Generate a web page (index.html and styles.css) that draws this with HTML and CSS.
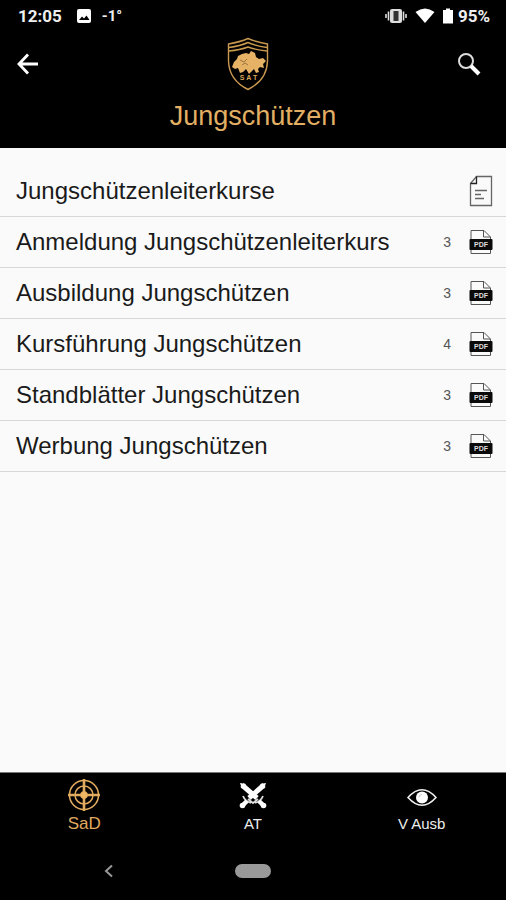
FILE: index.html
```html
<!DOCTYPE html>
<html lang="de">

<head>
  <meta charset="UTF-8">
  <meta name="viewport" content="width=device-width, initial-scale=1.0">
  <title>Jungschützen</title>
  <link rel="stylesheet" href="styles.css">
</head>

<body>

  <header>
    <div class="status">
      <span class="time">12:05</span>
      <svg width="16" height="16" viewBox="0 0 16 16">
        <rect x="1" y="1" width="14" height="14" rx="2" fill="#fff" />
        <path d="M3 12L6 8.500L8 10.500L10.500 7.500L13.500 12Z" fill="#000" />
      </svg>
      <span class="temp">-1°</span>
      <div class="status-right">
        <svg width="22" height="16" viewBox="0 0 22 16">
          <rect x="5" y="1" width="12" height="14" rx="2" fill="#ddd" />
          <rect x="8.500" y="3" width="5" height="10" fill="#333" />
          <path d="M3.500 3.500V12.500M18.500 3.500V12.500M1 6V10M21 6V10" stroke="#ddd" stroke-width="1.600" />
        </svg>
        <svg width="20" height="16" viewBox="0 0 20 16">
          <path d="M0.500 4Q10 -3 19.500 4L10 15Z" fill="#fff" />
        </svg>
        <svg width="10" height="16" viewBox="0 0 10 16">
          <path d="M0 2H3V0.500H7V2H10V15.500H0Z" fill="#fff" />
        </svg>
        <span class="battery">95%</span>
      </div>
    </div>

    <div class="topbar">
      <button class="icon-btn" aria-label="Zurück">
        <svg width="22" height="22" viewBox="0 0 22 22" fill="none" stroke="#fff" stroke-width="2.800">
          <path d="M11 1.500L2 11L11 20.500M2 11H21" />
        </svg>
      </button>
      <svg class="logo" width="42" height="54" viewBox="0 0 42 54">
        <g fill="none" stroke="#c9994f" stroke-width="1.400">
          <path d="M1.500 7Q13 5 21 1.500Q29 5 40.500 7V24Q40 43 21 52.500Q2 43 1.500 24Z" />
          <path d="M2 10.500Q13 9 21 5.500Q29 9 40 10.500M2 14Q13 13 21 10Q29 13 40 14" />
        </g>
        <path d="M5 30L7 25L10 22L11 19L15 17L19 16L22 17L24 14L28 16L29 20L32 22L36 21L39 24L36 27L37 31L33 30L31 32L32 35L29 36L27 32L24 35L22 37L19 32L16 35L13 36L11 31L8 32Z" fill="#e5b266" />
        <path d="M13 23L17 25L20 22M15 28L18 26L21 28" stroke="#9b7440" stroke-width="1" fill="none" />
        <text x="21.500" y="43" text-anchor="middle" font-family="Liberation Sans, sans-serif" font-size="7" font-weight="bold" fill="#d9a75c">S A T</text>
      </svg>
      <button class="icon-btn" aria-label="Suchen">
        <svg width="24" height="24" viewBox="0 0 24 24">
          <circle cx="9" cy="9" r="7" fill="none" stroke="#ddd" stroke-width="2" />
          <path d="M14 14L22 22" stroke="#fff" stroke-width="4" />
        </svg>
      </button>
    </div>
    <h1>Jungschützen</h1>
  </header>

  <main>
    <ul class="list">
      <li>
        <a href="#">
          <span class="name">Jungschützenleiterkurse</span>
          <svg width="24" height="32" viewBox="0 0 24 32" fill="none" stroke="#666">
            <path d="M7.500 1.500H22.500V30.500H1.500V8.500Z" stroke-width="1.300" />
            <path d="M7.500 1.500V8.500H1.500" stroke="#222" stroke-width="1.300" />
            <path d="M6 15.500H18M6 19.500H12M6 23.500H15" stroke-width="1.300" />
          </svg>
        </a>
      </li>
      <li>
        <a href="#">
          <span class="name">Anmeldung Jungschützenleiterkurs</span>
          <span class="count">3</span>
          <svg class="pdf" width="24" height="26" viewBox="0 0 24 26">
            <path d="M2 10V1.500H15L21.500 8V10M2 20V24.500H21.500V20M14.500 1.500V8H21" />
            <rect x="0.500" y="10" width="23" height="11" rx="1" />
            <text x="12" y="18" text-anchor="middle">PDF</text>
          </svg>
        </a>
      </li>
      <li>
        <a href="#">
          <span class="name">Ausbildung Jungschützen</span>
          <span class="count">3</span>
          <svg class="pdf" width="24" height="26" viewBox="0 0 24 26">
            <path d="M2 10V1.500H15L21.500 8V10M2 20V24.500H21.500V20M14.500 1.500V8H21" />
            <rect x="0.500" y="10" width="23" height="11" rx="1" />
            <text x="12" y="18" text-anchor="middle">PDF</text>
          </svg>
        </a>
      </li>
      <li>
        <a href="#">
          <span class="name">Kursführung Jungschützen</span>
          <span class="count">4</span>
          <svg class="pdf" width="24" height="26" viewBox="0 0 24 26">
            <path d="M2 10V1.500H15L21.500 8V10M2 20V24.500H21.500V20M14.500 1.500V8H21" />
            <rect x="0.500" y="10" width="23" height="11" rx="1" />
            <text x="12" y="18" text-anchor="middle">PDF</text>
          </svg>
        </a>
      </li>
      <li>
        <a href="#">
          <span class="name">Standblätter Jungschützen</span>
          <span class="count">3</span>
          <svg class="pdf" width="24" height="26" viewBox="0 0 24 26">
            <path d="M2 10V1.500H15L21.500 8V10M2 20V24.500H21.500V20M14.500 1.500V8H21" />
            <rect x="0.500" y="10" width="23" height="11" rx="1" />
            <text x="12" y="18" text-anchor="middle">PDF</text>
          </svg>
        </a>
      </li>
      <li>
        <a href="#">
          <span class="name">Werbung Jungschützen</span>
          <span class="count">3</span>
          <svg class="pdf" width="24" height="26" viewBox="0 0 24 26">
            <path d="M2 10V1.500H15L21.500 8V10M2 20V24.500H21.500V20M14.500 1.500V8H21" />
            <rect x="0.500" y="10" width="23" height="11" rx="1" />
            <text x="12" y="18" text-anchor="middle">PDF</text>
          </svg>
        </a>
      </li>
    </ul>
  </main>

  <footer>
    <nav class="tabs">
      <a href="#" class="active">
        <svg width="32" height="32" viewBox="0 0 32 32" fill="none" stroke="#e0ab5f">
          <circle cx="16" cy="16" r="14.500" stroke-width="1.600" />
          <circle cx="16" cy="16" r="9" stroke-width="1.500" />
          <path d="M16 0V32M0 16H32" stroke-width="2.600" />
          <circle cx="16" cy="16" r="3.500" fill="#f0b763" />
        </svg>
        <span>SaD</span>
      </a>
      <a href="#">
        <svg width="28" height="32" viewBox="0 0 28 32">
          <path d="M3 6L18 19M25 6L10 19" stroke="#fff" stroke-width="5" />
          <path d="M1 4L7 5L3 10ZM27 4L21 5L25 10Z" fill="#fff" />
          <path d="M4 17Q6 22 12 24M24 17Q22 22 16 24M9 20L14 24L19 20" stroke="#ddd" stroke-width="1.800" fill="none" />
          <path d="M8 22L3 27M20 22L25 27" stroke="#fff" stroke-width="4.500" />
          <circle cx="3.500" cy="26.500" r="2.800" fill="#fff" />
          <circle cx="24.500" cy="26.500" r="2.800" fill="#fff" />
        </svg>
        <span>AT</span>
      </a>
      <a href="#">
        <svg width="30" height="32" viewBox="0 0 30 32">
          <path d="M1 18.500Q15 3 29 18.500Q15 34 1 18.500Z" fill="none" stroke="#eee" stroke-width="1.600" />
          <circle cx="15" cy="18.500" r="6" fill="#fff" />
          <path d="M15 15.500A3 3 0 0 0 12 18.500" fill="none" stroke="#ccc" stroke-width="1" />
        </svg>
        <span>V Ausb</span>
      </a>
    </nav>
    <div class="sysnav">
      <button class="icon-btn back" aria-label="System zurück">
        <svg width="10" height="14" viewBox="0 0 10 14" fill="none" stroke="#999" stroke-width="2">
          <path d="M8 1.500L2 7L8 12.500" />
        </svg>
      </button>
      <button class="home" aria-label="Startbildschirm"></button>
    </div>
  </footer>

</body>

</html>
```

FILE: styles.css
```css
* {
  box-sizing: border-box;
}

body {
  font-family: "Liberation Sans", Arial, sans-serif;
  margin: 0;
  min-height: 100vh;
  display: flex;
  flex-direction: column;
  background-color: #fafafa;
  color: #1a1a1a;
}

svg {
  display: block;
  flex-shrink: 0;
}

a {
  color: inherit;
  text-decoration: none;
}

header {
  background-color: #000;
  padding-bottom: 16px;
}

.status {
  display: flex;
  align-items: center;
  height: 32px;
  padding: 0 16px 0 18px;
  font-family: Roboto, sans-serif;
  font-size: 17px;
  font-weight: bold;
  color: #eee;
}

.time {
  margin-right: 14px;
}

.temp {
  margin-left: 10px;
  font-size: 15px;
}

.status-right {
  display: flex;
  align-items: center;
  gap: 8px;
  margin-left: auto;
}

.battery {
  margin-left: -3px;
}

.topbar {
  display: flex;
  justify-content: space-between;
  align-items: center;
  height: 64px;
  padding: 0 25px 0 17px;
}

.icon-btn {
  padding: 0;
  border: none;
  background: none;
  cursor: pointer;
}

h1 {
  margin: 0;
  padding-top: 4px;
  font-size: 27px;
  line-height: 32px;
  font-weight: normal;
  text-align: center;
  color: #e2af64;
}

main {
  flex: 1;
  padding-top: 18px;
}

.list {
  list-style: none;
  margin: 0;
  padding: 0;
}

.list li {
  border-bottom: 1px solid #d8d8d8;
}

.list a {
  display: flex;
  align-items: center;
  height: 50px;
  padding: 0 13px 0 16px;
}

.name {
  flex: 1;
  font-size: 24px;
}

.count {
  margin-right: 18px;
  font-size: 14px;
  color: #555;
}

.pdf path {
  fill: none;
  stroke: #555;
}

.pdf rect {
  fill: #0a0a0a;
}

.pdf text {
  font-size: 7px;
  font-weight: bold;
  fill: #ddd;
}

footer {
  background-color: #000;
  border-top: 1px solid #777;
}

.tabs {
  display: grid;
  grid-template-columns: repeat(3, 1fr);
  height: 68px;
  padding-top: 6px;
}

.tabs a {
  display: flex;
  flex-direction: column;
  align-items: center;
  font-size: 15px;
  line-height: 26px;
  color: #eee;
}

.tabs .active {
  font-size: 17px;
  color: #e0ab5f;
}

.sysnav {
  display: grid;
  grid-template-columns: 1fr auto 1fr;
  align-items: center;
  column-gap: 121px;
  height: 59px;
}

.sysnav .back {
  justify-self: end;
}

.home {
  width: 36px;
  height: 14px;
  padding: 0;
  border: none;
  border-radius: 7px;
  background-color: #999;
}
```
